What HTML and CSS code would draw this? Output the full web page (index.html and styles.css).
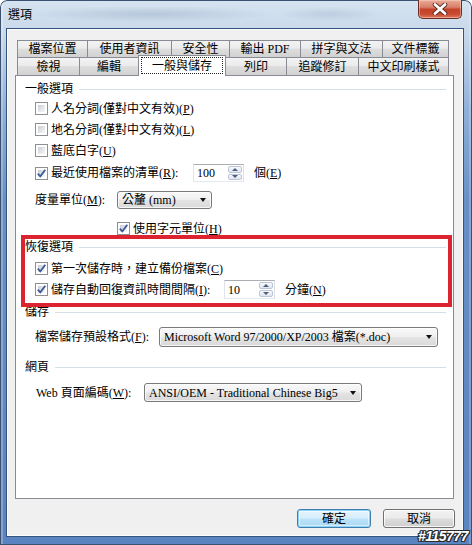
FILE: index.html
```html
<!DOCTYPE html>
<html lang="zh-Hant">
<head>
<meta charset="utf-8">
<title>選項</title>
<link rel="stylesheet" href="styles.css">
</head>
<body>
<div class="window">
  <div class="titlebar">
    <span class="title">選項</span>
    <span class="close">
      <svg width="16" height="12" viewBox="0 0 16 12">
        <path d="M3 1.5 L13 10.5 M13 1.5 L3 10.5" stroke="#5a2a25" stroke-width="4.6" stroke-linecap="round"/>
        <path d="M3 1.5 L13 10.5 M13 1.5 L3 10.5" stroke="#ffffff" stroke-width="2.8" stroke-linecap="round"/>
      </svg>
    </span>
  </div>
  <div class="client">
    <div class="tabs">
      <div class="tabrow r1">
        <div class="tab">檔案位置</div>
        <div class="tab">使用者資訊</div>
        <div class="tab">安全性</div>
        <div class="tab">輸出 PDF</div>
        <div class="tab">拼字與文法</div>
        <div class="tab">文件標籤</div>
      </div>
      <div class="tabrow r2">
        <div class="tab">檢視</div>
        <div class="tab">編輯</div>
        <div class="tab sel"><span class="focus">一般與儲存</span></div>
        <div class="tab">列印</div>
        <div class="tab">追蹤修訂</div>
        <div class="tab">中文印刷樣式</div>
      </div>
    </div>
    <div class="panel">
      <div class="gtitle g1">一般選項</div>
      <div class="row r-p"><span class="cb"></span><span class="lbl">人名分詞(僅對中文有效)(<u>P</u>)</span></div>
      <div class="row r-l"><span class="cb"></span><span class="lbl">地名分詞(僅對中文有效)(<u>L</u>)</span></div>
      <div class="row r-u"><span class="cb"></span><span class="lbl">藍底白字(<u>U</u>)</span></div>
      <div class="row r-r">
        <span class="cb on"><svg width="11" height="11" viewBox="0 0 11 11"><path d="M1.8 5.6 L4.3 8.3 L9.3 1.8" fill="none" stroke="#3d5898" stroke-width="1.8"/></svg></span>
        <span class="lbl w-r">最近使用檔案的清單(<u>R</u>):</span>
        <span class="spin s100"><span class="val">100</span><span class="arrows"><span class="up"></span><span class="dn"></span></span></span>
        <span class="unit">個(<u>E</u>)</span>
      </div>
      <div class="row r-m">
        <span class="flbl w-m">度量單位(<u>M</u>):</span>
        <span class="combo c-mm"><span class="ctext">公釐 (mm)</span><span class="arrow"></span></span>
      </div>
      <div class="row r-h">
        <span class="cb on"><svg width="11" height="11" viewBox="0 0 11 11"><path d="M1.8 5.6 L4.3 8.3 L9.3 1.8" fill="none" stroke="#3d5898" stroke-width="1.8"/></svg></span>
        <span class="lbl">使用字元單位(<u>H</u>)</span>
      </div>

      <div class="gtitle g2">恢復選項</div>
      <div class="row r-c">
        <span class="cb on"><svg width="11" height="11" viewBox="0 0 11 11"><path d="M1.8 5.6 L4.3 8.3 L9.3 1.8" fill="none" stroke="#3d5898" stroke-width="1.8"/></svg></span>
        <span class="lbl">第一次儲存時，建立備份檔案(<u>C</u>)</span>
      </div>
      <div class="row r-i">
        <span class="cb on"><svg width="11" height="11" viewBox="0 0 11 11"><path d="M1.8 5.6 L4.3 8.3 L9.3 1.8" fill="none" stroke="#3d5898" stroke-width="1.8"/></svg></span>
        <span class="lbl w-i">儲存自動回復資訊時間間隔(<u>I</u>):</span>
        <span class="spin s10"><span class="val">10</span><span class="arrows"><span class="up"></span><span class="dn"></span></span></span>
        <span class="unit">分鐘(<u>N</u>)</span>
      </div>

      <div class="gtitle g3">儲存</div>
      <div class="row r-f">
        <span class="flbl w-f">檔案儲存預設格式(<u>F</u>):</span>
        <span class="combo c-f"><span class="ctext">Microsoft Word 97/2000/XP/2003 檔案(*.doc)</span><span class="arrow"></span></span>
      </div>

      <div class="gtitle g4">網頁</div>
      <div class="row r-w">
        <span class="flbl w-w">Web 頁面編碼(<u>W</u>):</span>
        <span class="combo c-w"><span class="ctext">ANSI/OEM - Traditional Chinese Big5</span><span class="arrow"></span></span>
      </div>
    </div>
    <div class="buttons">
      <span class="btn ok">確定</span>
      <span class="btn cancel">取消</span>
    </div>
  </div>
  <div class="redbox"></div>
  <div class="wm">#115777</div>
</div>
</body>
</html>
```

FILE: styles.css
```css
* { box-sizing: border-box; }
html, body { margin: 0; padding: 0; }
body {
  width: 472px;
  height: 545px;
  overflow: hidden;
  background: #ffffff;
  font-family: "Liberation Serif", "Noto Sans CJK TC", serif;
  font-size: 12px;
  color: #000;
}
u { text-decoration: underline; text-underline-offset: 1px; }

.window {
  position: relative;
  width: 472px;
  height: 545px;
  display: flex;
  flex-direction: column;
  border-radius: 7px 7px 0 0;
  background:
    linear-gradient(to right, rgba(255,255,255,0.25) 0, rgba(255,255,255,0.25) 3px, rgba(0,0,0,0) 3px, rgba(0,0,0,0) 469px, rgba(255,255,255,0.2) 469px),
    linear-gradient(to bottom, #d6e3f0 0px, #c8d9eb 32px, #8fb0d8 110px, #6890c7 200px, #5a84c0 100%);
  box-shadow: inset 0 0 0 1px #3b516f;
}

.titlebar {
  height: 29px;
  flex: none;
  display: flex;
  align-items: flex-start;
  padding-left: 8px;
  border-radius: 7px 7px 0 0;
  background:
    radial-gradient(ellipse 120px 8px at 150px 14px, rgba(120,140,170,0.28), rgba(120,140,170,0) 100%),
    radial-gradient(ellipse 50px 7px at 330px 14px, rgba(120,140,170,0.2), rgba(120,140,170,0) 100%);
}
.title {
  margin-top: 8px;
  line-height: 14px;
}
.close {
  margin-left: auto;
  margin-right: 10px;
  width: 44px;
  height: 19px;
  display: flex;
  align-items: center;
  justify-content: center;
  border: 1px solid #6b2c25;
  border-top: 0;
  border-radius: 0 0 5px 5px;
  background: linear-gradient(#e9ab99 0%, #d8806a 40%, #c4432a 52%, #c74a30 78%, #dc7a5c 100%);
  box-shadow: inset 0 0 0 1px rgba(255,220,210,0.45);
}

.client {
  width: 456px;
  height: 507px;
  margin-left: 7px;
  flex: none;
  background: #f0f0f0;
  box-shadow: 0 0 0 1px #34547f, inset 0 0 0 1px #fbfcfd;
  display: flex;
  flex-direction: column;
}

/* tabs */
.tabs {
  margin: 11px 0 0 10px;
  width: 432px;
}
.tabrow {
  display: flex;
  align-items: flex-start;
}
.r1 { height: 17px; }
.r2 { height: 18px; }
.tab {
  height: 100%;
  margin-left: -1px;
  border: 1px solid #898c95;
  border-bottom: 0;
  display: flex;
  align-items: center;
  justify-content: center;
  line-height: 14px;
  white-space: nowrap;
  background: linear-gradient(#f3f3f3 0%, #ebebeb 45%, #dedede 50%, #d2d2d2 100%);
}
.tab:first-child { margin-left: 0; }
.r1 .tab:nth-child(1) { width: 71px; }
.r1 .tab:nth-child(2) { width: 85px; }
.r1 .tab:nth-child(3) { width: 59px; }
.r1 .tab:nth-child(4) { width: 72px; }
.r1 .tab:nth-child(5) { width: 83px; }
.r1 .tab:nth-child(6) { width: 67px; }
.r2 .tab:nth-child(1) { width: 63px; }
.r2 .tab:nth-child(2) { width: 60px; }
.r2 .tab:nth-child(3) { width: 88px; }
.r2 .tab:nth-child(4) { width: 62px; }
.r2 .tab:nth-child(5) { width: 73px; }
.r2 .tab:nth-child(6) { width: 91px; }
.tab.sel {
  position: relative;
  z-index: 1;
  height: 21px;
  margin-top: -2px;
  background: #ffffff;
  padding-bottom: 1px;
}
.focus {
  display: flex;
  align-items: center;
  justify-content: center;
  width: 82px;
  height: 17px;
  outline: 1px dotted #222;
  outline-offset: -1px;
}

/* panel */
.panel {
  margin-left: 8px;
  width: 439px;
  height: 424px;
  flex: none;
  border: 1px solid #898c95;
  background: #ffffff;
  padding: 6px 7px 0 9px;
  display: flex;
  flex-direction: column;
}
.gtitle {
  height: 14px;
  line-height: 14px;
  display: flex;
  align-items: center;
  white-space: nowrap;
}
.gtitle::after {
  content: "";
  flex: 1;
  height: 1px;
  margin-left: 6px;
  background: #d5dfe5;
}
.g2 { margin-top: 1px; }
.g3 { margin-top: 5px; }
.g4 { margin-top: 13px; }

.row {
  display: flex;
  align-items: center;
  padding-left: 10px;
  white-space: nowrap;
  line-height: 14px;
  flex: none;
}
.r-p { margin-top: 2px; height: 21px; }
.r-l { height: 21px; }
.r-u { height: 21px; }
.r-r { margin-top: 1px; height: 22px; }
.r-m { margin-top: 6px; height: 20px; }
.r-h { margin-top: 8px; height: 21px; padding-left: 92px; }
.r-c { margin-top: 4px; height: 21px; }
.r-i { height: 21px; }
.r-f { margin-top: 8px; height: 20px; }
.r-w { margin-top: 9px; height: 19px; }

.cb {
  width: 13px;
  height: 13px;
  flex: none;
  display: flex;
  border: 1px solid #8e8f8f;
  padding: 2px;
  background: linear-gradient(135deg, #c9cdd4 0%, #e4e6e9 55%, #f7f7f7 100%) content-box, #ffffff;
}
.cb svg { margin: -2px; flex: none; }
.lbl { margin-left: 3px; }
.w-r { width: 142px; flex: none; }
.w-i { width: 173px; flex: none; }
.flbl { flex: none; }
.w-m { width: 82px; }
.w-f { width: 124px; }
.w-w { width: 109px; padding-left: 1px; }
.unit { margin-left: 10px; }

.spin {
  display: flex;
  flex: none;
  border: 1px solid #abadb3;
  border-color: #abadb3 #dbdfe6 #e3e9ef #e2e3ea;
  background: #ffffff;
  padding: 1px;
}
.s100 { width: 51px; height: 18px; }
.s10 { width: 51px; height: 19px; }
.val {
  flex: 1;
  padding-left: 2px;
  display: flex;
  align-items: center;
}
.arrows {
  width: 14px;
  display: flex;
  flex-direction: column;
  gap: 1px;
}
.up, .dn {
  flex: 1;
  display: flex;
  align-items: center;
  justify-content: center;
  border: 1px solid #bcc6d6;
  border-radius: 2px;
  background: linear-gradient(#f7f9fc, #dfe5ee);
}
.up::before {
  content: "";
  border-left: 3px solid transparent;
  border-right: 3px solid transparent;
  border-bottom: 3px solid #4b5d82;
}
.dn::before {
  content: "";
  border-left: 3px solid transparent;
  border-right: 3px solid transparent;
  border-top: 3px solid #4b5d82;
}

.combo {
  display: flex;
  align-items: center;
  flex: none;
  border: 1px solid #7a7a7a;
  border-radius: 3px;
  padding: 0 5px 0 4px;
  background: linear-gradient(#f9f9f9 0%, #efefef 48%, #e4e4e4 52%, #d9d9d9 100%);
  box-shadow: inset 0 0 0 1px rgba(255,255,255,0.75);
}
.c-mm { width: 95px; height: 18px; }
.c-f { width: 279px; height: 20px; }
.c-w { width: 218px; height: 19px; }
.ctext { flex: 1; white-space: nowrap; overflow: hidden; }
.arrow {
  flex: none;
  border-left: 3.5px solid transparent;
  border-right: 3.5px solid transparent;
  border-top: 4px solid #111;
}

/* buttons */
.buttons {
  display: flex;
  justify-content: flex-end;
  gap: 12px;
  margin-top: 10px;
  padding-right: 8px;
}
.btn {
  height: 19px;
  display: flex;
  align-items: center;
  justify-content: center;
  border-radius: 3px;
  line-height: 14px;
  border: 1px solid #707070;
  background: linear-gradient(#f2f2f2 0%, #ebebeb 48%, #dddddd 52%, #cfcfcf 100%);
  box-shadow: inset 0 0 0 1px rgba(255,255,255,0.8);
}
.btn.ok {
  width: 74px;
  border-color: #3c7fb1;
  background: linear-gradient(#e6f5fd 0%, #d6eefc 48%, #bde3f9 52%, #a9d8f4 100%);
  box-shadow: inset 0 0 0 1px #8fd0f5, inset 0 0 0 2px rgba(255,255,255,0.5);
}
.btn.cancel { width: 72px; }

/* annotation overlays */
.redbox {
  position: absolute;
  left: 21px;
  top: 235px;
  width: 431px;
  height: 72px;
  border: 4px solid #dc2430;
}
.wm {
  position: absolute;
  right: 4px;
  bottom: 1px;
  font-family: "Liberation Sans", sans-serif;
  font-weight: bold;
  font-style: italic;
  font-size: 14px;
  line-height: 15px;
  letter-spacing: -0.5px;
  color: #ffffff;
  text-shadow: 1px 0 0 #2a2a2a, -1px 0 0 #2a2a2a, 0 1px 0 #2a2a2a, 0 -1px 0 #2a2a2a, 1px 1px 0 #2a2a2a, -1px -1px 0 #2a2a2a, 1px -1px 0 #2a2a2a, -1px 1px 0 #2a2a2a;
}
```
